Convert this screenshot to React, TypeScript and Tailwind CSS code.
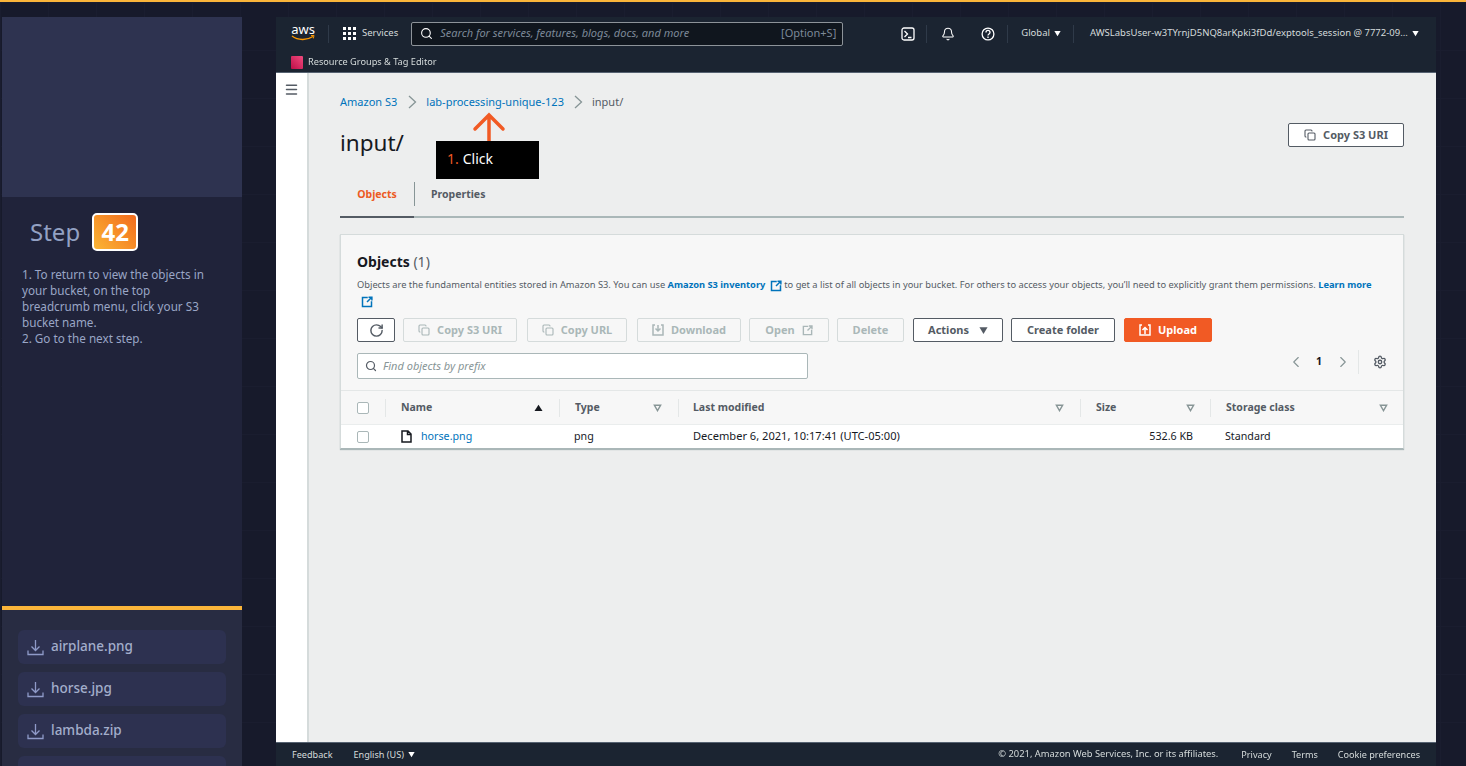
import React from "react";
import { Copy, RotateCw, Search, Bell, Settings, ChevronLeft, ChevronRight, Menu } from "lucide-react";

const Ext = ({ c = "#0073bb", s = 12 }: { c?: string; s?: number }) => (
  <svg width={s} height={s} viewBox="0 0 16 16" fill="none" stroke={c} strokeWidth="2" className="inline-block shrink-0">
    <path d="M9 2H2v12h12V7" />
    <path d="M8 8l6-6M10 1.5h4.5V6" />
  </svg>
);

const DownTri = ({ c = "#545b64", s = 8 }: { c?: string; s?: number }) => (
  <svg width={s} height={s} viewBox="0 0 10 10" className="shrink-0"><path d="M0.5 1.5h9L5 9z" fill={c} /></svg>
);

const SortTri = () => (
  <svg width="9" height="8" viewBox="0 0 10 9" fill="none" stroke="#879596" strokeWidth="1.6" className="shrink-0"><path d="M1.5 1.5h7L5 7.5z" /></svg>
);

const DlIcon = () => (
  <svg width="17" height="17" viewBox="0 0 17 17" fill="none" stroke="#8f9ac8" strokeWidth="1.3" className="shrink-0">
    <path d="M8.5 1v10M4.5 7.5l4 4 4-4M1 11.5V15.5h15v-4" />
  </svg>
);

const TrayDown = () => (
  <svg width="12" height="12" viewBox="0 0 12 12" fill="none" stroke="#aab7b8" strokeWidth="1.5" className="shrink-0">
    <path d="M3 1H1v10h10V1H9M6 1v6M3.5 4.5L6 7l2.5-2.5" />
  </svg>
);

const FileBtn = ({ name }: { name: string }) => (
  <div className="h-[34px] shrink-0 rounded-md bg-[#2d3150] flex items-center pl-[9px] gap-[7px]">
    <DlIcon />
    <span className="text-[13.5px] mb-[1px] font-medium text-[#a3aecb]">{name}</span>
  </div>
);

const Sidebar = () => (
  <aside className="w-[240px] shrink-0 flex flex-col font-['Noto_Sans',sans-serif]">
    <div className="h-[180px] bg-[#2e3350]" />
    <div className="h-[409px] bg-[#20233a] text-[#9aa6c6]">
      <div className="flex items-center pl-[28px] pt-[16px] gap-[12px]">
        <span className="text-[24px] leading-[38px] text-[#93a1c3]">Step</span>
        <span className="w-[46px] h-[38px] rounded-[5px] border-2 border-white bg-[linear-gradient(45deg,#fbb534,#f26b1d)] flex items-center justify-center text-white text-[24px] font-bold leading-none">42</span>
      </div>
      <p className="mt-[15px] pl-[20px] pr-[30px] text-[11.7px] leading-[16px]">
        1. To return to view the objects in your bucket, on the top breadcrumb menu, click your S3 bucket name.
        <br />
        2. Go to the next step.
      </p>
    </div>
    <div className="h-[4px] bg-[#fbb53a]" />
    <div className="flex-1 min-h-0 overflow-hidden bg-[#282c42] px-[16px] pt-[20px] flex flex-col gap-[8px]">
      <FileBtn name="airplane.png" />
      <FileBtn name="horse.jpg" />
      <FileBtn name="lambda.zip" />
      <FileBtn name="" />
    </div>
  </aside>
);

const Divider = () => <div className="w-px h-[18px] bg-[#2f3a49]" />;

const TopNav = () => (
  <header className="h-[56px] shrink-0 bg-[#1b2431] border-b border-[#566271] text-[#d5dbdb] flex flex-col">
    <div className="h-[33px] flex items-center pl-[15px] pr-[14px] text-[9.5px]">
      <div className="w-[24px] flex flex-col items-center mt-[-2px]">
        <span className="text-[13px] leading-[11px] text-white">aws</span>
        <svg width="24" height="6" viewBox="0 0 24 6" fill="none"><path d="M1 1c6 4.5 15 4.5 21 .5" stroke="#f90" strokeWidth="1.4" /><path d="M20 .6l3-.2-.6 3" stroke="#f90" strokeWidth="1" /></svg>
      </div>
      <div className="w-px h-[18px] bg-[#2f3a49] ml-[13px]" />
      <svg width="13" height="13" viewBox="0 0 13 13" className="ml-[14px] shrink-0" fill="#fff">
        {[0, 5, 10].flatMap((x) => [0, 5, 10].map((y) => <rect key={`${x}${y}`} x={x} y={y} width="3" height="3" />))}
      </svg>
      <span className="ml-[6px]">Services</span>
      <div className="ml-[13px] w-[432px] h-[24px] bg-[#10161e] border border-[#8d9399] rounded-[2px] flex items-center pl-[8px] pr-[6px]">
        <Search size={13} color="#fff" strokeWidth={2} />
        <span className="ml-[7px] italic text-[11px] text-[#7d8998]">Search for services, features, blogs, docs, and more</span>
        <span className="ml-auto text-[11px] text-[#7d8998]">[Option+S]</span>
      </div>
      <svg width="14" height="14" viewBox="0 0 14 14" fill="none" stroke="#fff" className="ml-[58px] shrink-0" strokeWidth="1.3"><rect x="1" y="1" width="12" height="12" rx="2" /><path d="M3.5 4l3 3-3 3M7 10.5h3.5" /></svg>
      <div className="ml-[11px]"><Divider /></div>
      <Bell size={14} color="#fff" strokeWidth={1.8} className="ml-[14px]" />
      <svg width="14" height="14" viewBox="0 0 14 14" fill="none" stroke="#fff" strokeWidth="1.3" className="ml-[26px] shrink-0"><circle cx="7" cy="7" r="5.9" /><path d="M5 5.4c0-2.6 4-2.6 4 0 0 1.6-2 1.6-2 3.2M7 9.6v1.3" /></svg>
      <div className="ml-[12px]"><Divider /></div>
      <span className="ml-[13px]">Global</span>
      <span className="ml-[4px]"><DownTri c="#fff" s={7} /></span>
      <div className="ml-[12px]"><Divider /></div>
      <span className="ml-[16px] whitespace-nowrap">AWSLabsUser-w3TYrnjD5NQ8arKpki3fDd/exptools_session @ 7772-09...</span>
      <span className="ml-[4px]"><DownTri c="#fff" s={7} /></span>
    </div>
    <div className="flex-1 flex items-center pl-[15px] text-[9.2px] text-[#d5dbdb] pt-[2px]">
      <span className="w-[12px] h-[13px] bg-[linear-gradient(45deg,#bd0f48,#f04a7e)] rounded-[1px]" />
      <span className="ml-[5px]">Resource Groups &amp; Tag Editor</span>
    </div>
  </header>
);

const Btn = ({ cn, icon, label, after }: { cn: string; icon?: React.ReactNode; label?: string; after?: React.ReactNode }) => (
  <div className={`h-[24px] shrink-0 flex items-center justify-center gap-[7px] text-[11px] font-bold border rounded-[2px] ${cn}`}>
    {icon}
    {label && <span>{label}</span>}
    {after}
  </div>
);

const dis = "border-[#d5dbdb] text-[#aab7b8] bg-[#f7f7f7]";
const act = "border-[#545b64] text-[#545b64] bg-white";

const Toolbar = () => (
  <div className="flex items-center mt-[8px]">
    <Btn cn={`w-[38px] ${act}`} icon={<RotateCw size={15} color="#545b64" strokeWidth={2.3} />} />
    <Btn cn={`w-[114px] ml-[8px] ${dis}`} icon={<Copy size={12} color="#aab7b8" strokeWidth={2.2} />} label="Copy S3 URI" />
    <Btn cn={`w-[100px] ml-[10px] ${dis}`} icon={<Copy size={12} color="#aab7b8" strokeWidth={2.2} />} label="Copy URL" />
    <Btn cn={`w-[104px] ml-[10px] ${dis}`} icon={<TrayDown />} label="Download" />
    <Btn cn={`w-[80px] ml-[8px] ${dis}`} label="Open" after={<Ext c="#aab7b8" s={11} />} />
    <Btn cn={`w-[67px] ml-[8px] ${dis}`} label="Delete" />
    <Btn cn={`w-[90px] ml-[9px] gap-[10px] ${act}`} label="Actions" after={<DownTri c="#545b64" s={9} />} />
    <Btn cn={`w-[104px] ml-[8px] ${act}`} label="Create folder" />
    <Btn
      cn="w-[88px] ml-[9px] border-[#f15a24] bg-[#f15a24] text-white"
      icon={
        <svg width="12" height="12" viewBox="0 0 12 12" fill="none" stroke="#fff" strokeWidth="1.5">
          <path d="M3 1H1v10h10V1H9M6 10V3.5M3.5 6L6 3.5 8.5 6" />
        </svg>
      }
      label="Upload"
    />
  </div>
);

const ColHead = ({ label, tri, cn }: { label?: string; tri?: React.ReactNode; cn?: string }) => (
  <div className={`flex items-center justify-between h-[18px] border-l border-[#e4e7e7] ${cn ?? ""}`}>
    <span>{label}</span>
    {tri}
  </div>
);

const Check = () => <span className="w-[12px] h-[12px] border border-[#aab7b8] rounded-[2px] bg-white block" />;

const gridCols = "grid grid-cols-[44px_174px_119px_402px_130px_1fr] items-center";

const DownTriUp = () => (
  <svg width="9" height="8" viewBox="0 0 10 9" className="shrink-0"><path d="M.5 8h9L5 .8z" fill="#16191f" /></svg>
);

const ObjectsPanel = () => (
  <section className="mt-[16px] h-[215px] bg-[#f7f7f7] border border-[#d5dbdb] border-b-[#aab7b8] shadow-[0_1px_1px_#aab7b8] flex flex-col">
    <div className="px-[16px] pt-[18px]">
      <h2 className="text-[14px] leading-[18px] font-bold text-[#16191f]">
        Objects <span className="font-normal text-[#545b64]">(1)</span>
      </h2>
      <p className="mt-[6px] text-[9.3px] leading-[16px] text-[#545b64] whitespace-nowrap">
        Objects are the fundamental entities stored in Amazon S3. You can use <b className="text-[#0073bb]">Amazon S3 inventory</b> <span className="ml-[2px]"><Ext /></span> to get a list of all objects in your bucket. For others to access your objects, you’ll need to explicitly grant them permissions. <b className="text-[#0073bb]">Learn more</b>
      </p>
      <div className="h-[17px] flex items-center pl-[4px]"><Ext /></div>
      <Toolbar />
      <div className="flex items-center mt-[11px]">
        <div className="w-[451px] h-[26px] bg-white border border-[#aab7b8] rounded-[2px] flex items-center pl-[7px] gap-[6px]">
          <Search size={12} color="#545b64" strokeWidth={2.4} />
          <span className="italic text-[11px] text-[#879596]">Find objects by prefix</span>
        </div>
        <div className="ml-auto flex items-center text-[#16191f] mt-[-8px]">
          <ChevronLeft size={18} color="#879596" strokeWidth={1.5} />
          <span className="text-[10.5px] font-bold ml-[11px] mr-[12px]">1</span>
          <ChevronRight size={18} color="#879596" strokeWidth={1.5} />
          <div className="w-px h-[24px] bg-[#e4e7e7] ml-[6px] mr-[14px]" />
          <Settings size={14} color="#545b64" strokeWidth={2.2} />
        </div>
      </div>
    </div>
    <div className={`mt-[11px] h-[34px] shrink-0 border-t border-[#e4e7e7] text-[10.5px] font-bold text-[#545b64] ${gridCols}`}>
      <div className="pl-[16px]"><Check /></div>
      <ColHead label="Name" cn="pl-[15px] pr-[16px]" tri={<DownTriUp />} />
      <ColHead label="Type" cn="pl-[15px] pr-[16px]" tri={<SortTri />} />
      <ColHead label="Last modified" cn="pl-[14px] pr-[16px]" tri={<SortTri />} />
      <ColHead label="Size" cn="pl-[15px] pr-[15px]" tri={<SortTri />} />
      <ColHead label="Storage class" cn="pl-[15px] pr-[15px]" tri={<SortTri />} />
    </div>
    <div className={`flex-1 bg-white border-t border-[#eaeded] text-[10.7px] text-[#16191f] ${gridCols}`}>
      <div className="pl-[16px]"><Check /></div>
      <div className="pl-[16px] flex items-center gap-[9px]">
        <svg width="11" height="13" viewBox="0 0 11 13" fill="none" stroke="#16191f" strokeWidth="1.5"><path d="M1 1h6l3 3v8H1zM6.5 1v3.5H10" /></svg>
        <span className="text-[#0073bb]">horse.png</span>
      </div>
      <div className="pl-[15px]">png</div>
      <div className="pl-[15px] text-[11.1px]">December 6, 2021, 10:17:41 (UTC-05:00)</div>
      <div className="pr-[17px] text-right">532.6 KB</div>
      <div className="pl-[15px]">Standard</div>
    </div>
  </section>
);

const Crumb = () => (
  <svg width="9" height="14" viewBox="0 0 9 14" fill="none" stroke="#879596" strokeWidth="1.3" className="shrink-0"><path d="M1 1l6.5 6L1 13" /></svg>
);

const Content = () => (
  <main className="relative flex-1 min-w-0 bg-[#edeeee] border-l-2 border-[#d5dbdb] pl-[31px] pr-[32px] text-[#16191f]">
    <nav className="flex items-center h-[16px] mt-[21px] text-[11px]">
      <span className="text-[#0073bb]">Amazon S3</span>
      <span className="ml-[11px]"><Crumb /></span>
      <span className="ml-[9px] text-[#0073bb]">lab-processing-unique-123</span>
      <span className="ml-[10px]"><Crumb /></span>
      <span className="ml-[9px] text-[#545b64]">input/</span>
    </nav>
    <div className="flex items-start justify-between h-[34px] mt-[18px]">
      <h1 className="text-[22.5px] leading-[30px] font-normal">input/</h1>
      <Btn cn="w-[116px] !border-[#545b64] bg-white text-[#545b64] mt-[-5px] border-[1.5px]" icon={<Copy size={12} color="#545b64" strokeWidth={2.2} />} label="Copy S3 URI" />
    </div>
    <div className="mt-[20px] h-[36px] border-b-2 border-[#aab7b8] flex text-[10.5px] font-bold relative">
      <div className="w-[74px] h-[36px] -mb-[2px] border-b-2 border-[#545b64] flex items-start justify-center pt-[5px] text-[#ec5a24]">
        <span>Objects</span>
      </div>
      <div className="w-px h-[24px] bg-[#879596]" />
      <div className="pl-[16px] pt-[5px] text-[#545b64]">Properties</div>
    </div>
    <ObjectsPanel />

    <svg width="34" height="32" viewBox="0 0 34 32" fill="none" stroke="#f15a24" strokeWidth="3.5" strokeLinecap="round" className="absolute left-[163px] top-[39px]">
      <path d="M17 30V3M3 17L17 3l14 14" />
    </svg>
    <div className="absolute left-[127px] top-[68px] w-[103px] h-[38px] bg-black flex items-center pl-[11px] pb-[3px] text-[14px] text-white">
      <span className="text-[#f15a24] mr-[4px]">1.</span>Click
    </div>
  </main>
);

const Footer = () => (
  <footer className="h-[24px] shrink-0 bg-[#1b2431] border-t border-[#566271] flex items-center pl-[16px] pr-[16px] text-[9.1px] text-[#d5dbdb]">
    <span>Feedback</span>
    <span className="ml-[21px]">English (US)</span>
    <span className="ml-[4px]"><DownTri c="#fff" s={7} /></span>
    <span className="ml-auto text-[9.35px]">© 2021, Amazon Web Services, Inc. or its affiliates.</span>
    <span className="ml-[23px]">Privacy</span>
    <span className="ml-[20px]">Terms</span>
    <span className="ml-[20px]">Cookie preferences</span>
  </footer>
);

export default function App() {
  return (
    <div className="w-[1466px] h-[766px] overflow-hidden bg-[#171a2b] bg-[linear-gradient(#1a1d2f_1px,transparent_1px),linear-gradient(90deg,#1a1d2f_1px,transparent_1px)] bg-[size:48px_48px] border-t-2 border-[#fbb53a] flex pl-[2px] pt-[15px] gap-[34px]">
      <Sidebar />
      <div className="w-[1160px] shrink-0 flex flex-col font-['Noto_Sans',sans-serif] blur-[0.35px]">
        <TopNav />
        <div className="flex-1 min-h-0 flex">
          <div className="w-[31px] shrink-0 bg-white pt-[9px] pl-[8px]">
            <Menu size={15} color="#545b64" strokeWidth={2.4} />
          </div>
          <Content />
        </div>
        <Footer />
      </div>
    </div>
  );
}
